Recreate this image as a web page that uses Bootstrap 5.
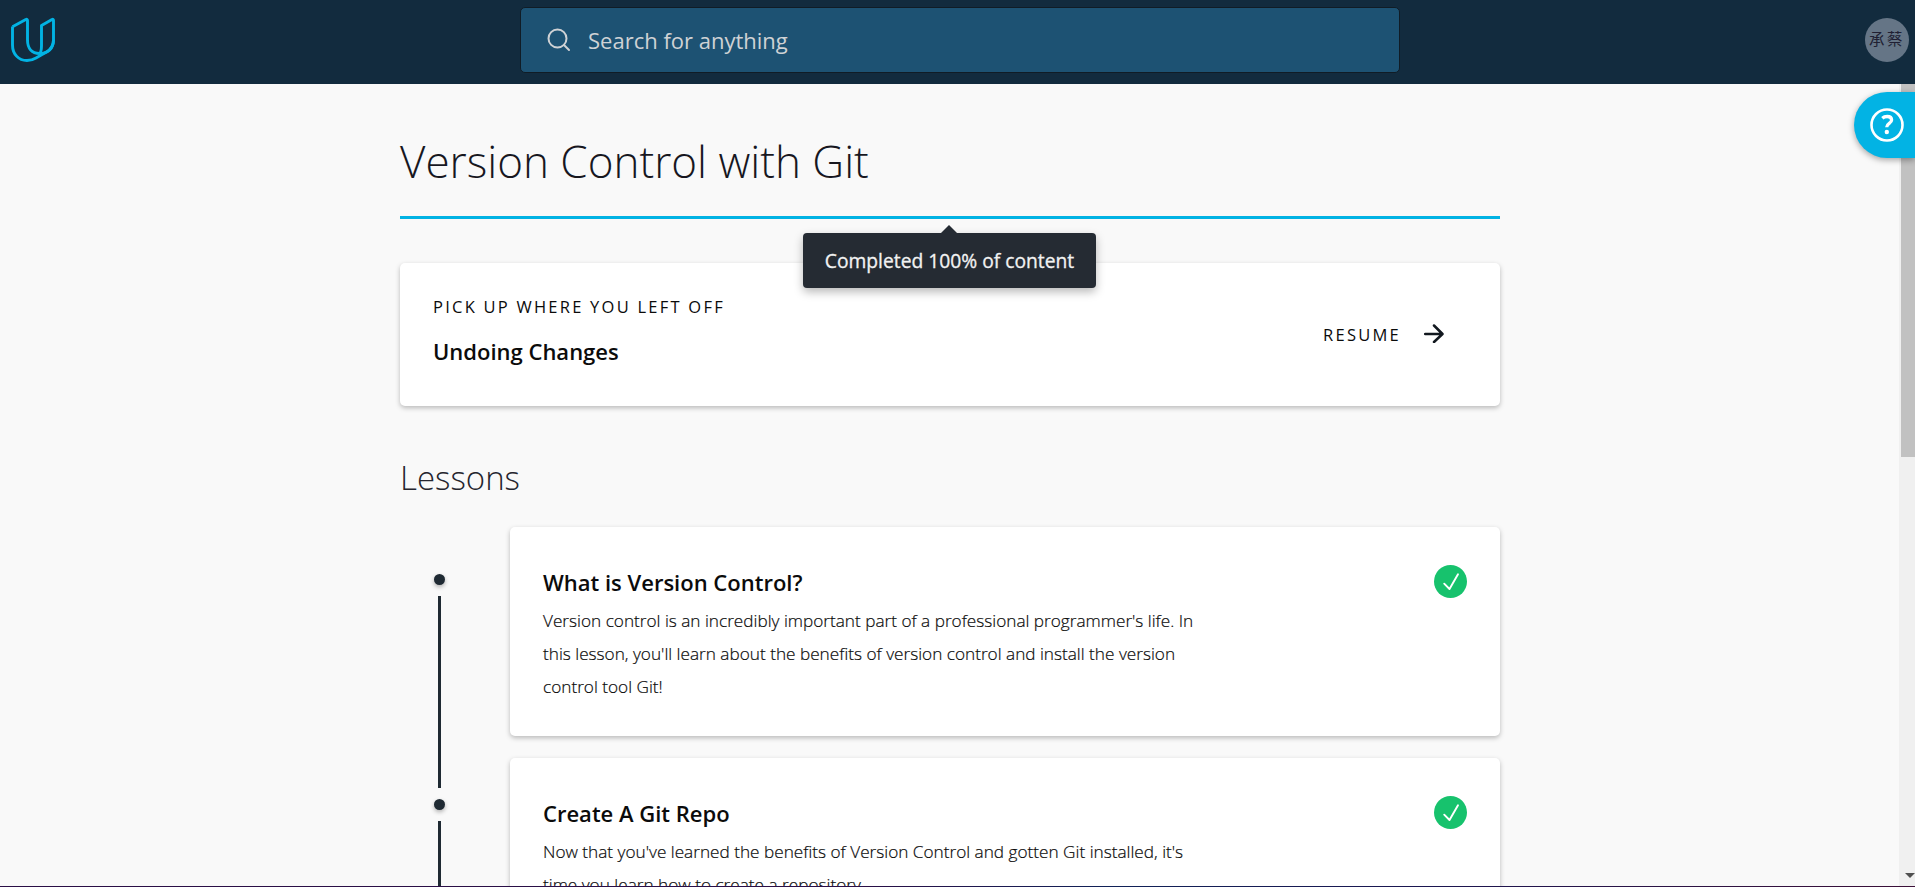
<!DOCTYPE html>
<html lang="en">
<head>
<meta charset="utf-8">
<meta name="viewport" content="width=device-width, initial-scale=1">
<title>Version Control with Git</title>
<link href="https://cdn.jsdelivr.net/npm/bootstrap@5.3.0/dist/css/bootstrap.min.css" rel="stylesheet">
<style>
  body { font-family: "Open Sans", "Noto Sans CJK TC", sans-serif; background: #f9f9f9; color: #0b0b0b; height: 887px; overflow: hidden; }
  .topbar { height: 84px; background: #122b3e; padding: 0 6px 0 11px; }
  .searchbox { width: 880px; height: 66px; margin: 7px auto 0 0; background: #1d5273; border: 1px solid #101c26; border-radius: 5px; padding-left: 26px; gap: 17px; color: #cfd2d5; font-size: 22px; }
  .brand { width: 509px; padding-top: 17px; }
  .avatar { width: 44px; height: 44px; margin-top: 18px; background: #657586; color: #201f33; font-size: 15.400px; letter-spacing: 2.500px; }
  .viewport { height: 802px; }
  .page-col { width: 1100px; margin-left: 400px; }
  .course-title { font-size: 44px; font-weight: 300; line-height: 66px; margin: 44px 0 22px; color: #17171f; }
  .progress-line { height: 3px; background: #02b3e4; }
  .tip { left: 403px; top: 17px; width: 293px; height: 55px; background: #252b33; color: #f2f2f2; border-radius: 4px; font-size: 19.250px; -webkit-text-stroke: .3px #f2f2f2; padding-top: 1px; box-shadow: 0 4px 10px rgba(0,0,0,.28); z-index: 3; }
  .tip::before { content: ""; position: absolute; left: 138px; top: -8px; border: solid transparent; border-width: 0 8px 8px; border-bottom-color: #252b33; }
  .panel { background: #fff; border-radius: 5px; box-shadow: 0 2px 5px rgba(0,0,0,.26); }
  .resume-panel { height: 143px; margin-top: 44px; padding: 0 56px 0 33px; }
  .resume-text { padding-bottom: 6px; }
  .resume-link { gap: 23px; }
  .caps { font-size: 16.500px; letter-spacing: 2.240px; line-height: 24px; }
  .item-title { font-size: 22px; font-weight: 600; line-height: 33px; margin: 0; }
  .section-title { font-size: 33px; font-weight: 300; line-height: 44px; margin: 50px 0 27px; color: #25252e; }
  .lesson { width: 990px; height: 209px; padding: 38px 33px 0; margin-bottom: 22px; }
  .lesson .item-title { margin-top: 1px; }
  .lesson p { font-size: 17.210px; font-weight: 300; -webkit-text-stroke: .2px #0b0b0b; line-height: 33px; width: 670px; margin: 5px 0 0; color: #0b0b0b; }
  .rail { width: 11px; margin: 47px 0 0 34px; gap: 11px; }
  .dot { width: 11px; height: 11px; background: #1f2a33; border-radius: 50%; box-shadow: 0 2px 4px rgba(0,0,0,.3); flex: none; }
  .bar { width: 3px; height: 192px; background: #1f2a33; flex: none; }
  .scroller { width: 16px; background: #f0f0f0; }
  .thumb { width: 14px; height: 373px; background: #c1c1c1; }
  .help { right: 0; top: 92px; width: 61px; height: 66px; border-radius: 33px 0 0 33px; background: #02b3e4; box-shadow: 0 2px 6px rgba(0,0,0,.35); padding-left: 16px; z-index: 4; }
  .edge { height: 1px; background: linear-gradient(90deg, #2a0f46, #2a0f46 45%, #112258 58%, #1c1650 75%, #3c1038); }
</style>
</head>
<body>
<header class="topbar d-flex align-items-start">
  <div class="brand">
    <svg class="d-block" width="46" height="46" viewBox="0 0 46 46" fill="none" stroke="#02b3e4" stroke-width="2.900" stroke-linejoin="round"><path d="M1.500 9.800 14.800 2.500Q16.500 1.800 16.500 3.500V23C16.500 31.500 21 36.500 28.500 36.500 37 36.500 42.500 31.500 42.500 23V3.500Q42.500 1.800 41 2.500L30.500 8.500V29C30.500 34 29.800 36.500 27.500 38.500"/><path d="M1.500 9.500V28C1.500 37 7.500 43.500 16 43.500 19.500 43.500 22.500 42.500 25 41L35 35.300C40 32.500 42.500 28.500 42.500 23"/></svg>
  </div>
  <div class="searchbox d-flex align-items-center">
    <svg width="24" height="24" viewBox="0 0 24 24" fill="none" stroke="#cfd2d5" stroke-width="2" stroke-linecap="round"><circle cx="10.500" cy="10.500" r="9"/><path d="m17 17 5 5"/></svg>
    <span>Search for anything</span>
  </div>
  <div class="avatar rounded-circle d-flex align-items-center justify-content-center">承蔡</div>
</header>
<div class="viewport d-flex justify-content-between overflow-hidden">
  <main class="page-col">
    <h1 class="course-title">Version Control with Git</h1>
    <div class="progress-line position-relative">
      <div class="tip position-absolute d-flex align-items-center justify-content-center">Completed 100% of content</div>
    </div>
    <section class="panel resume-panel d-flex justify-content-between align-items-center">
      <div class="resume-text">
        <div class="caps">PICK UP WHERE YOU LEFT OFF</div>
        <h2 class="item-title mt-3">Undoing Changes</h2>
      </div>
      <div class="resume-link d-flex align-items-center">
        <span class="caps">RESUME</span>
        <svg class="mb-1" width="20" height="20" viewBox="0 0 20 20" fill="none" stroke="#12181f" stroke-width="2.500" stroke-linecap="round" stroke-linejoin="round"><path d="M1.200 11H18M10 2.500 18.500 11 10 19"/></svg>
      </div>
    </section>
    <h2 class="section-title">Lessons</h2>
    <div class="d-flex justify-content-between">
      <div class="rail d-flex flex-column align-items-center">
        <span class="dot"></span><span class="bar"></span><span class="dot"></span><span class="bar"></span>
      </div>
      <div>
        <article class="panel lesson d-flex justify-content-between align-items-start">
          <div><h3 class="item-title">What is Version Control?</h3>
          <p>Version control is an incredibly important part of a professional programmer's life. In<br>this lesson, you'll learn about the benefits of version control and install the version<br>control tool Git!</p></div>
          <svg width="33" height="33" viewBox="0 0 33 33"><circle cx="16.500" cy="16.500" r="16.500" fill="#17c26d"/><path d="m10.200 18.700 5.300 5.300L24 9.200" fill="none" stroke="#fff" stroke-width="1.900" stroke-linecap="round" stroke-linejoin="round"/></svg>
        </article>
        <article class="panel lesson d-flex justify-content-between align-items-start">
          <div><h3 class="item-title">Create A Git Repo</h3>
          <p>Now that you've learned the benefits of Version Control and gotten Git installed, it's<br>time you learn how to create a repository.</p></div>
          <svg width="33" height="33" viewBox="0 0 33 33"><circle cx="16.500" cy="16.500" r="16.500" fill="#17c26d"/><path d="m10.200 18.700 5.300 5.300L24 9.200" fill="none" stroke="#fff" stroke-width="1.900" stroke-linecap="round" stroke-linejoin="round"/></svg>
        </article>
      </div>
    </div>
  </main>
  <aside class="scroller d-flex flex-column justify-content-between align-items-end">
    <div class="thumb"></div>
    <svg class="mb-2" width="10" height="5" viewBox="0 0 10 5"><path d="M0 0h10L5 5Z" fill="#505050"/></svg>
  </aside>
</div>
<div class="edge"></div>
<div class="help position-absolute d-flex align-items-center">
  <svg width="34" height="34" viewBox="0 0 34 34" fill="none" stroke="#fff"><circle cx="17" cy="17" r="15.500" stroke-width="2.600"/><path d="M12.300 10.200c1.400-1.300 3-1.700 4.900-1.700 2.700 0 4.400 1.300 4.400 3.500 0 3.600-4.900 3.300-4.900 7.300" stroke-width="3.300"/><circle cx="16.800" cy="24" r="2.200" fill="#fff" stroke="none"/></svg>
</div>
<script src="https://cdn.jsdelivr.net/npm/bootstrap@5.3.0/dist/js/bootstrap.bundle.min.js"></script>
</body>
</html>
